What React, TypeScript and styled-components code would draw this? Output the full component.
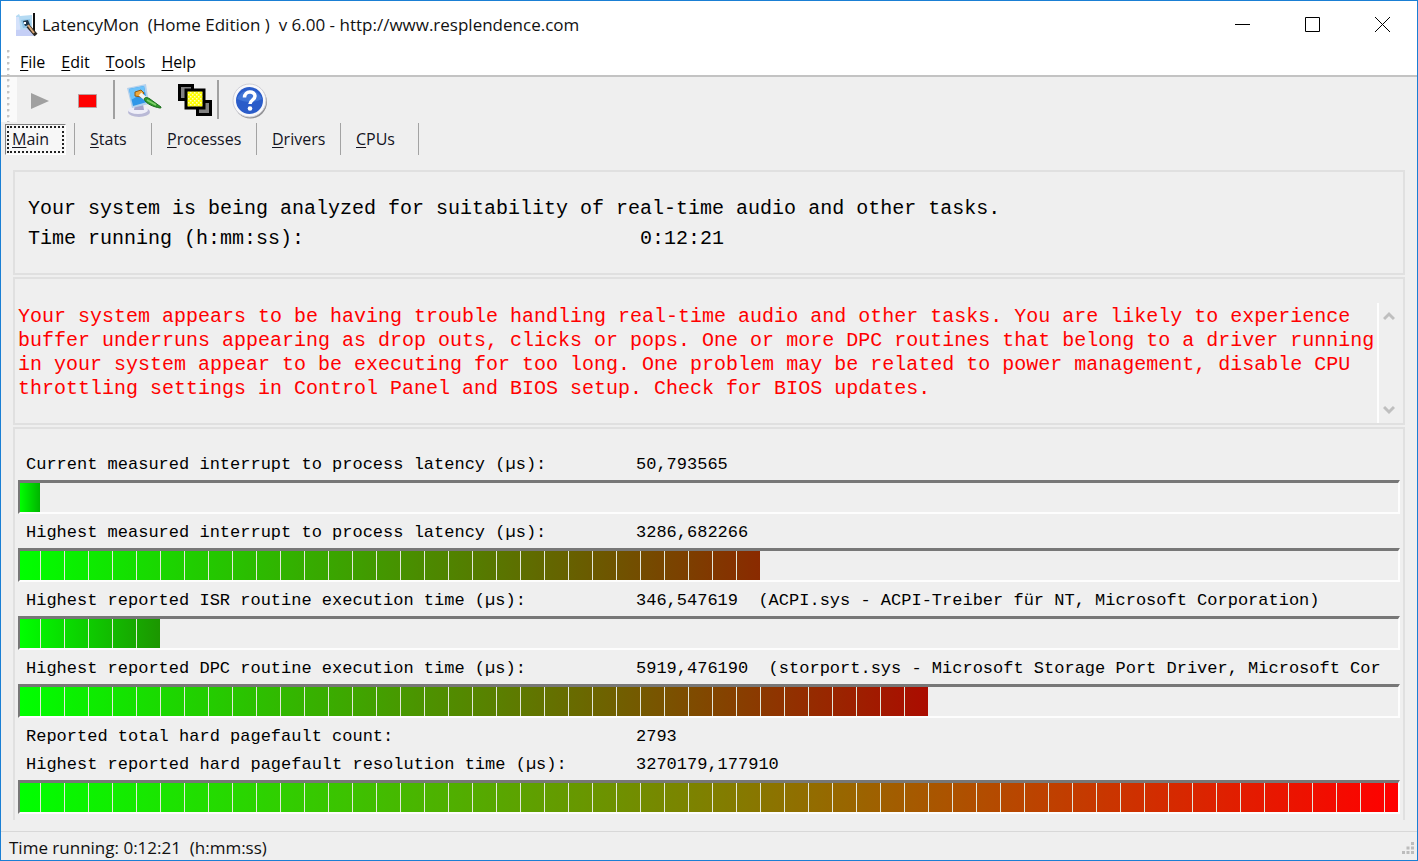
import React from "react";
import styled, { createGlobalStyle, css } from "styled-components";

const UI = `"Open Sans", "Noto Sans", sans-serif`;
const MONO = `"Liberation Mono", "DejaVu Sans Mono", monospace`;

const GlobalStyle = createGlobalStyle`
  *, *::before, *::after { box-sizing: border-box; }
  body { margin: 0; background: #efefef; }
  button { font: inherit; color: inherit; border: 0; padding: 0; margin: 0; background: none; }
`;

const Window = styled.div`
  min-height: 100vh;
  display: flex;
  flex-direction: column;
  background: #efefef;
  border: 1px solid #1a7fd4;
  color: #000;
  font-family: ${UI};
  font-size: 17px;
`;

const TitleBar = styled.header`
  display: flex;
  align-items: center;
  height: 47px;
  padding-left: 13px;
  background: #fff;
`;

const Title = styled.h1`
  flex: 1;
  margin: 0 0 0 4px;
  font-size: 17px;
  font-weight: 400;
  line-height: 24px;
  color: #111;
  white-space: pre;
`;

const CaptionButton = styled.button`
  display: grid;
  place-items: center;
  width: 70px;
  height: 45px;
`;

const MenuBar = styled.nav`
  display: flex;
  align-items: center;
  height: 29px;
  padding-left: 6px;
  background: #fff;
  border-bottom: 2px solid #c3c3c3;
`;

const Grip = styled.span`
  width: 3px;
  height: 100%;
  background: radial-gradient(circle at 1px 1px, #c4c4c4 1px, transparent 2px) 0 2px / 3px 6px repeat-y;
`;

const MenuItem = styled.button`
  margin-left: 10px;
  font-size: 16px;
  line-height: 24px;
  & + & { margin-left: 16px; }
  u { text-underline-offset: 2px; }
`;

const ToolBar = styled.div`
  display: flex;
  align-items: center;
  height: 45px;
`;

const GripArea = styled.div`
  width: 16px;
  height: 100%;
  padding-left: 6px;
  background: #fafafa;
`;

const ToolButton = styled.button<{ $w: number }>`
  display: grid;
  place-items: center;
  width: ${(p) => p.$w}px;
  height: 42px;
  padding-top: 2px;
`;

const ToolDivider = styled.span`
  width: 2px;
  height: 39px;
  background: #a0a0a0;
`;

const TabBar = styled.div`
  display: flex;
  align-items: center;
  height: 34px;
  padding-left: 4px;
`;

const Tab = styled.button<{ $w: number; $active?: boolean }>`
  width: ${(p) => p.$w}px;
  height: 31px;
  padding-left: 15px;
  text-align: left;
  font-size: 16px;
  line-height: 24px;
  color: #14141f;
  u { text-underline-offset: 2px; }
  ${(p) =>
    p.$active &&
    css`
      margin-right: 8px;
      padding-left: 6px;
      background: #f7f7f7;
      border: 1px solid;
      border-color: #808080 #fff #fff #808080;
      outline: 2px dotted #222;
      outline-offset: -4px;
    `}
`;

const TabDivider = styled.span`
  width: 1px;
  height: 32px;
  background: #a3a3a3;
`;

const Main = styled.main`
  flex: 1;
  display: flex;
  flex-direction: column;
  gap: 2px;
  padding: 14px 12px 11px;
`;

const Panel = styled.section<{ $open?: boolean }>`
  border: 2px solid #e0e0e0;
  ${(p) => p.$open && css`border-bottom: 0; flex: 1;`}
`;

const Overview = styled(Panel)`
  display: grid;
  grid-template-columns: 612px 1fr;
  padding: 22px 13px 19px;
  font-family: ${MONO};
  font-size: 20px;
  line-height: 30px;
`;

const Wide = styled.span`
  grid-column: 1 / -1;
`;

const Notice = styled(Panel)`
  display: flex;
  padding: 24px 4px 0 3px;
`;

const NoticeText = styled.p`
  flex: 1;
  margin: 0;
  padding: 2px 0 22px;
  font-family: ${MONO};
  font-size: 20px;
  line-height: 24px;
  color: #f00;
`;

const ScrollBar = styled.div`
  display: flex;
  flex-direction: column;
  justify-content: space-between;
  width: 22px;
  border-left: 2px solid #fdfdfd;
`;

const ScrollButton = styled.button`
  display: grid;
  place-items: center;
  height: 26px;
`;

const Measurements = styled(Panel)`
  padding: 17px 3px 3px;
  overflow: hidden;
`;

const Group = styled.div`
  padding-top: 5px;
`;

const Line = styled.div`
  display: grid;
  grid-template-columns: 610px 1fr;
  padding-left: 8px;
  font-family: ${MONO};
  font-size: 17px;
  line-height: 28px;
  white-space: pre;
`;

const Track = styled.div`
  height: 34px;
  margin-top: 1px;
  border: 2px solid;
  border-color: #777 #fdfdfd #fdfdfd #777;
  border-top-width: 3px;
`;

const Fill = styled.div`
  height: 100%;
`;

const StatusBar = styled.footer`
  display: flex;
  align-items: center;
  justify-content: space-between;
  height: 29px;
  padding: 3px 2px 0 8px;
  border-top: 1px solid #d8d8d8;
  font-size: 17px;
  line-height: 24px;
  color: #111;
  white-space: pre;
`;

const AppIcon = () => (
  <svg width="24" height="24" viewBox="0 0 24 24" aria-hidden="true">
    <path d="M2 3l3-2 1 2 12-1v17l4 4H2z" fill="#b4daf3" />
    <path d="M2 4h3l2 19H2z" fill="#d5e2fb" />
    <path d="M7 7l9-1 1 8-8 1z" fill="#8cc3e6" />
    <path d="M9 8l5-1 2 5-5 1z" fill="#1d3547" />
    <path d="M10 9h2v2h-2z" fill="#fff" />
    <path d="M2 17l14-1 4 7H2z" fill="#c5cff6" />
    <path d="M20 0v21" stroke="#111" strokeWidth="2" />
    <path d="M14 13l8 9" stroke="#2b261f" strokeWidth="4" />
    <path d="M14 12l6 8" stroke="#d8a878" strokeWidth="2" />
  </svg>
);

const MonitorIcon = () => (
  <svg width="36" height="34" viewBox="0 0 36 34" aria-hidden="true">
    <ellipse cx="13" cy="28" rx="11" ry="5" fill="#b9b9d6" />
    <ellipse cx="12" cy="26" rx="10" ry="4" fill="#eeeef8" />
    <path d="M9 20h8l1 6H8z" fill="#a3a3ca" />
    <path d="M1 4l19-4 3 20-17 4z" fill="#b3d0ec" />
    <path d="M3 5l15-3 3 16-14 4z" fill="#2f97e8" />
    <path d="M3 5l15-3 1 6L5 16z" fill="#6cc2fa" />
    <path d="M9 8l6-2 3 3-3 4-6-1z" fill="#eea83a" stroke="#8f5a14" />
    <path d="M14 10l6 5" stroke="#f3f3ef" strokeWidth="4" />
    <path d="M18 15c1-2 3-2 6 0l11 8c0 1 0 1-1 1-6-1-14-4-16-9z" fill="#2f9a2c" stroke="#1b6b1c" />
    <path d="M21 16l9 5" stroke="#7fd068" strokeWidth="2" fill="none" />
  </svg>
);

const LayersIcon = () => (
  <svg width="34" height="33" viewBox="0 0 34 33" aria-hidden="true">
    <defs>
      <pattern id="weave" width="4" height="4" patternUnits="userSpaceOnUse">
        <path d="M0 0h4v4H0z" fill="#ff0" />
        <path d="M0 0h1.500v1.500H0zM2 2h1.500v1.500H2z" fill="#ffffb8" />
      </pattern>
    </defs>
    <path d="M1.500 1.500h13v14h-13z" fill="#808080" stroke="#000" strokeWidth="3" />
    <path d="M19.500 17.500h13v13h-13z" fill="#808080" stroke="#000" strokeWidth="3" />
    <path d="M8 6h18v18H8z" fill="url(#weave)" stroke="#000" strokeWidth="3" />
  </svg>
);

const HelpIcon = () => (
  <svg width="36" height="36" viewBox="0 0 36 36" aria-hidden="true">
    <circle cx="18.500" cy="19" r="16.500" fill="#8f8f92" />
    <circle cx="17.500" cy="17.500" r="16.500" fill="#f8f8fa" stroke="#cfcfd6" />
    <circle cx="17.500" cy="17.500" r="13.500" fill="#2a5cc9" />
    <path d="M5 16a13 12 0 0 1 25 0c-8 4-16 4-25 0z" fill="#3f74d6" />
    <path d="M12.500 14.500c0-7 10.500-7 10.500-1.500 0 4-5 4-5 8" fill="none" stroke="#fff" strokeWidth="3.500" />
    <circle cx="18" cy="25.500" r="2.300" fill="#fff" />
  </svg>
);

const Chevron = ({ down }: { down?: boolean }) => (
  <svg width="12" height="10" viewBox="0 0 12 10" aria-hidden="true">
    <path d={down ? "M1 2l5 5 5-5" : "M1 8l5-5 5 5"} fill="none" stroke="#bfbfbf" strokeWidth="3" />
  </svg>
);

const SizeGrip = () => (
  <svg width="14" height="14" viewBox="0 0 14 14" aria-hidden="true">
    <path
      d="M10 1h3v3h-3zM5.500 5.500h3v3h-3zM10 5.500h3v3h-3zM1 10h3v3H1zM5.500 10h3v3h-3zM10 10h3v3h-3z"
      fill="#bcbcbc"
    />
  </svg>
);

type BarProps = { label: string; percent: number; end: string };

const Bar = ({ label, percent, end }: BarProps) => (
  <Track role="meter" aria-label={label} aria-valuemin={0} aria-valuemax={100} aria-valuenow={percent}>
    <Fill
      style={{
        width: `${percent}%`,
        background: `repeating-linear-gradient(to right, transparent 0 23px, #e4e8dc 23px 24px) -3px 0 / 2400px 100%, linear-gradient(to right, #00ff00, ${end})`,
      }}
    />
  </Track>
);

type Reading = { label: string; value: string; bar?: { percent: number; end: string } };

const readings: Reading[][] = [
  [{ label: "Current measured interrupt to process latency (µs):", value: "50,793565", bar: { percent: 1.45, end: "#00b400" } }],
  [{ label: "Highest measured interrupt to process latency (µs):", value: "3286,682266", bar: { percent: 53.7, end: "#8a2a00" } }],
  [
    {
      label: "Highest reported ISR routine execution time (µs):",
      value: "346,547619  (ACPI.sys - ACPI-Treiber für NT, Microsoft Corporation)",
      bar: { percent: 10.16, end: "#1c9600" },
    },
  ],
  [
    {
      label: "Highest reported DPC routine execution time (µs):",
      value: "5919,476190  (storport.sys - Microsoft Storage Port Driver, Microsoft Cor",
      bar: { percent: 65.9, end: "#ab0c00" },
    },
  ],
  [
    { label: "Reported total hard pagefault count:", value: "2793" },
    { label: "Highest reported hard pagefault resolution time (µs):", value: "3270179,177910", bar: { percent: 100, end: "#ff0000" } },
  ],
];

const menus = ["File", "Edit", "Tools", "Help"];

const tabs = [
  { name: "Main", width: 61 },
  { name: "Stats", width: 76 },
  { name: "Processes", width: 104 },
  { name: "Drivers", width: 83 },
  { name: "CPUs", width: 77 },
];

const Mnemonic = ({ text }: { text: string }) => (
  <>
    <u>{text[0]}</u>
    {text.slice(1)}
  </>
);

export default function App() {
  return (
    <>
      <GlobalStyle />
      <Window>
        <TitleBar>
          <AppIcon />
          <Title>{"LatencyMon  (Home Edition )  v 6.00 - http://www.resplendence.com"}</Title>
          <CaptionButton aria-label="Minimize">
            <svg width="15" height="15"><path d="M0 7.500h15" stroke="#000" /></svg>
          </CaptionButton>
          <CaptionButton aria-label="Maximize">
            <svg width="15" height="15"><path d="M.5.500h14v14H.5z" fill="none" stroke="#000" /></svg>
          </CaptionButton>
          <CaptionButton aria-label="Close">
            <svg width="15" height="15"><path d="M0 0l15 15M15 0L0 15" stroke="#000" /></svg>
          </CaptionButton>
        </TitleBar>

        <MenuBar>
          <Grip />
          {menus.map((m) => (
            <MenuItem key={m}><Mnemonic text={m} /></MenuItem>
          ))}
        </MenuBar>

        <ToolBar role="toolbar">
          <GripArea><Grip as="div" /></GripArea>
          <ToolButton $w={45} aria-label="Start">
            <svg width="20" height="18"><path d="M1 1l18 8-18 8z" fill="#a0a0a0" /></svg>
          </ToolButton>
          <ToolButton $w={51} aria-label="Stop">
            <svg width="19" height="14"><path d="M.5.500h18v13H.5z" fill="#f00" stroke="#b9a0a0" /></svg>
          </ToolButton>
          <ToolDivider />
          <ToolButton $w={57} aria-label="Display options"><MonitorIcon /></ToolButton>
          <ToolButton $w={45} aria-label="Windows"><LayersIcon /></ToolButton>
          <ToolDivider />
          <ToolButton $w={62} aria-label="Help"><HelpIcon /></ToolButton>
        </ToolBar>

        <TabBar role="tablist">
          {tabs.map((t, i) => (
            <React.Fragment key={t.name}>
              <Tab role="tab" $w={t.width} $active={i === 0} aria-selected={i === 0}>
                <Mnemonic text={t.name} />
              </Tab>
              <TabDivider />
            </React.Fragment>
          ))}
        </TabBar>

        <Main>
          <Overview>
            <Wide>Your system is being analyzed for suitability of real-time audio and other tasks.</Wide>
            <span>Time running (h:mm:ss):</span>
            <span>0:12:21</span>
          </Overview>

          <Notice>
            <NoticeText>
              Your system appears to be having trouble handling real-time audio and other tasks. You are likely to
              experience buffer underruns appearing as drop outs, clicks or pops. One or more DPC routines that belong
              to a driver running in your system appear to be executing for too long. One problem may be related to
              power management, disable CPU throttling settings in Control Panel and BIOS setup. Check for BIOS updates.
            </NoticeText>
            <ScrollBar>
              <ScrollButton aria-label="Scroll up"><Chevron /></ScrollButton>
              <ScrollButton aria-label="Scroll down"><Chevron down /></ScrollButton>
            </ScrollBar>
          </Notice>

          <Measurements $open>
            {readings.map((group) => (
              <Group key={group[0].label}>
                {group.map((r) => (
                  <React.Fragment key={r.label}>
                    <Line>
                      <span>{r.label}</span>
                      <span>{r.value}</span>
                    </Line>
                    {r.bar && <Bar label={r.label} percent={r.bar.percent} end={r.bar.end} />}
                  </React.Fragment>
                ))}
              </Group>
            ))}
          </Measurements>
        </Main>

        <StatusBar>
          <span>{"Time running: 0:12:21  (h:mm:ss)"}</span>
          <SizeGrip />
        </StatusBar>
      </Window>
    </>
  );
}
